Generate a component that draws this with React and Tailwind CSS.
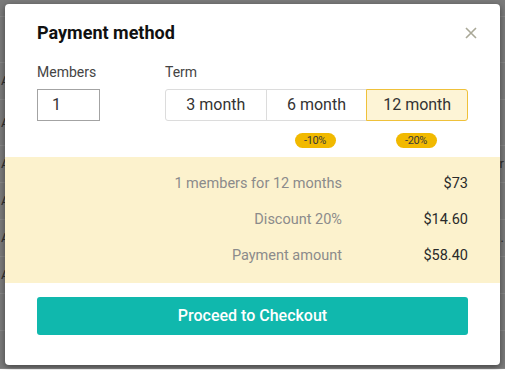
import React from 'react';

const terms = [
  { label: '3 month' },
  { label: '6 month', badge: '-10%' },
  { label: '12 month', badge: '-20%', active: true },
];

const rows = [
  { label: '1 members for 12 months', value: '$73' },
  { label: 'Discount 20%', value: '$14.60' },
  { label: 'Payment amount', value: '$58.40' },
];

// faint page behind the overlay
const bgRows = [17, 46, 37, 46, 37, 37, 37, 37, 37, 38];

function Backdrop() {
  return (
    <div className="flex flex-col bg-[#7a7a7a]">
      {bgRows.map((h, i) => (
        <div
          key={i}
          className="border-b border-[#868686] flex items-center justify-between text-[13px] text-[#2e2e2e]"
          style={{ height: h }}
        >
          <span className="pl-[1px]">{i > 1 && i < 8 ? 'A' : ''}</span>
          <span className="pr-[1px]">{i === 4 ? 'er' : i === 6 ? '3.' : ''}</span>
        </div>
      ))}
    </div>
  );
}

function CloseIcon() {
  return (
    <svg width="12" height="12" viewBox="0 0 12 12" className="block">
      <path d="M1 1 L11 11 M11 1 L1 11" stroke="#a9a897" strokeWidth="1.6" fill="none" />
    </svg>
  );
}

export default function App() {
  return (
    <div className="relative w-[505px] h-[370px] overflow-hidden font-['Roboto',sans-serif]">
      <Backdrop />

      {/* modal */}
      <div className="absolute left-[5px] top-[4px] w-[495px] h-[361px] bg-white rounded-[4px] shadow-[0_2px_6px_rgba(0,0,0,0.45)] flex flex-col">
        <button className="absolute top-[23px] right-[23px]">
          <CloseIcon />
        </button>

        <div className="px-8 pt-4">
          <h2 className="h-[26px] leading-[26px] text-[18px] font-bold text-[#111]">Payment method</h2>

          <div className="flex mt-4">
            <div className="w-[129px] flex flex-col">
              <span className="h-5 leading-5 text-[14px] text-[#444]">Members</span>
              <div className="mt-[7px] w-[63px] h-8 border border-[#a3a3a3] flex items-center pl-[14px] text-[16px] text-[#333]">
                1
              </div>
            </div>

            <div className="flex flex-col">
              <span className="h-5 leading-5 text-[14px] text-[#444]">Term</span>
              <div className="mt-[7px] flex w-[303px] h-8">
                {terms.map((t, i) => (
                  <div
                    key={t.label}
                    className={`flex-1 flex items-center justify-center text-[16px] text-[#333] border ${
                      t.active
                        ? 'bg-[#fdf4d6] border-[#efc13a] rounded-r-[3px] -ml-px'
                        : 'border-[#dcdcdc]'
                    } ${i === 0 ? 'rounded-l-[3px]' : ''} ${i === 1 ? '-ml-px' : ''}`}
                  >
                    {t.label}
                  </div>
                ))}
              </div>
              <div className="mt-3 flex w-[303px] h-[15px]">
                {terms.map((t) => (
                  <div key={t.label} className="flex-1 flex justify-center pr-[3px]">
                    {t.badge && (
                      <span className="w-[41px] h-[15px] rounded-full bg-[#f1b900] text-[11px] leading-[15px] text-center text-[#3a3a3a] tracking-[-0.4px]">
                        {t.badge}
                      </span>
                    )}
                  </div>
                ))}
              </div>
            </div>
          </div>
        </div>

        {/* summary */}
        <div className="mt-[9px] bg-[#fcf2cd] py-[9px] pr-8">
          {rows.map((r) => (
            <div key={r.label} className="h-9 flex items-center justify-end text-[14.5px]">
              <span className="text-[#8b8b8b]">{r.label}</span>
              <span className="w-[126px] text-right text-[#2a2a2a]">{r.value}</span>
            </div>
          ))}
        </div>

        <div className="px-8 mt-[14px]">
          <button className="w-full h-[38px] rounded-[3px] bg-[#10b8ad] text-white text-[16px] font-medium">
            Proceed to Checkout
          </button>
        </div>
      </div>
    </div>
  );
}
